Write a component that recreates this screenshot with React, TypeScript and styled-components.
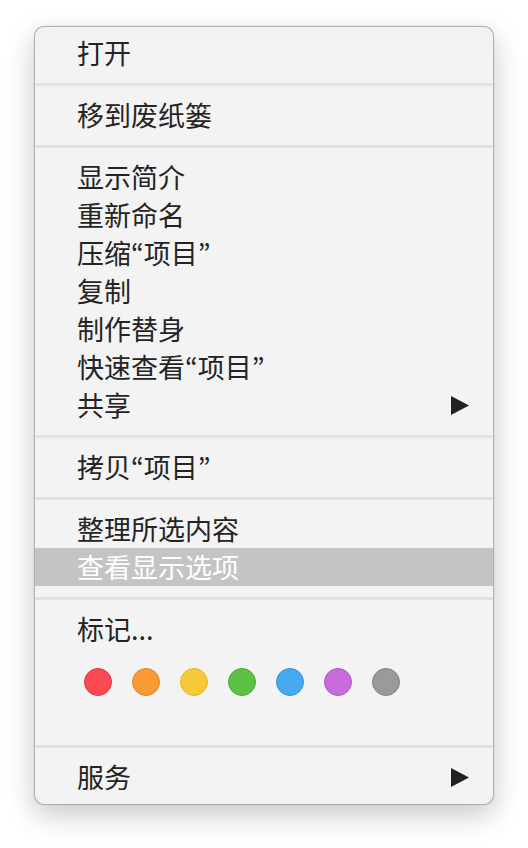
import React from 'react';
import styled, { createGlobalStyle } from 'styled-components';

const GlobalStyle = createGlobalStyle`
  html, body {
    margin: 0;
    padding: 0;
    background: #ffffff;
  }
  body {
    font-family: "Noto Sans CJK SC", "Noto Sans", sans-serif;
  }
`;

const Page = styled.div`
  width: 528px;
  height: 848px;
  padding: 26px 0 0 34px;
  box-sizing: border-box;
`;

const Menu = styled.div`
  width: 460px;
  box-sizing: border-box;
  background: #f3f3f3;
  border: 1px solid rgba(0, 0, 0, 0.28);
  border-radius: 10px;
  padding: 7px 0 8px;
  box-shadow: 0 10px 28px rgba(0, 0, 0, 0.22), 0 0 2px rgba(0, 0, 0, 0.08);
  display: flex;
  flex-direction: column;
`;

const Item = styled.div<{ $active?: boolean }>`
  height: 38px;
  display: flex;
  align-items: center;
  justify-content: space-between;
  padding: 0 24px 0 42px;
  font-size: 27px;
  line-height: 38px;
  color: ${(p) => (p.$active ? '#ffffff' : '#242424')};
  background: ${(p) => (p.$active ? '#c4c4c4' : 'transparent')};
  white-space: nowrap;
`;

// proportional curly quotes, as the reference draws them
const Quote = styled.span`
  font-family: "Noto Sans CJK JP", "Noto Sans CJK SC", sans-serif;
`;

const Separator = styled.div`
  height: 24px;
  display: flex;
  align-items: center;

  &::after {
    content: '';
    flex: 1;
    height: 3px;
    background: #e2e2e2;
  }
`;

const TagRow = styled.div`
  height: 86px;
  display: flex;
  align-items: flex-start;
  gap: 20px;
  padding: 20px 0 0 49px;
  box-sizing: border-box;
`;

const Dot = styled.span<{ $fill: string; $edge: string }>`
  width: 28px;
  height: 28px;
  border-radius: 50%;
  box-sizing: border-box;
  background: ${(p) => p.$fill};
  border: 1.5px solid ${(p) => p.$edge};
`;

const Arrow = () => (
  <svg width="18" height="19" viewBox="0 0 18 19">
    <path d="M0 0 L18 9.5 L0 19 Z" fill="#222222" />
  </svg>
);

const tags = [
  { fill: '#fc4a55', edge: '#df3440' },
  { fill: '#f99a35', edge: '#e2822a' },
  { fill: '#f5c937', edge: '#e4b52a' },
  { fill: '#5dc244', edge: '#45a733' },
  { fill: '#47a9f1', edge: '#3290d8' },
  { fill: '#c86cdd', edge: '#ae55c3' },
  { fill: '#9a9a9a', edge: '#828282' },
];

const Quoted = ({ head, name }: { head: string; name: string }) => (
  <span>
    {head}
    <Quote>“</Quote>
    {name}
    <Quote>”</Quote>
  </span>
);

function App() {
  return (
    <>
      <GlobalStyle />
      <Page>
        <Menu>
          <Item>打开</Item>
          <Separator />
          <Item>移到废纸篓</Item>
          <Separator />
          <Item>显示简介</Item>
          <Item>重新命名</Item>
          <Item>
            <Quoted head="压缩" name="项目" />
          </Item>
          <Item>复制</Item>
          <Item>制作替身</Item>
          <Item>
            <Quoted head="快速查看" name="项目" />
          </Item>
          <Item>
            共享
            <Arrow />
          </Item>
          <Separator />
          <Item>
            <Quoted head="拷贝" name="项目" />
          </Item>
          <Separator />
          <Item>整理所选内容</Item>
          <Item $active>查看显示选项</Item>
          <Separator />
          <Item>标记...</Item>
          <TagRow>
            {tags.map((t) => (
              <Dot key={t.fill} $fill={t.fill} $edge={t.edge} />
            ))}
          </TagRow>
          <Separator />
          <Item>
            服务
            <Arrow />
          </Item>
        </Menu>
      </Page>
    </>
  );
}

export default App;
